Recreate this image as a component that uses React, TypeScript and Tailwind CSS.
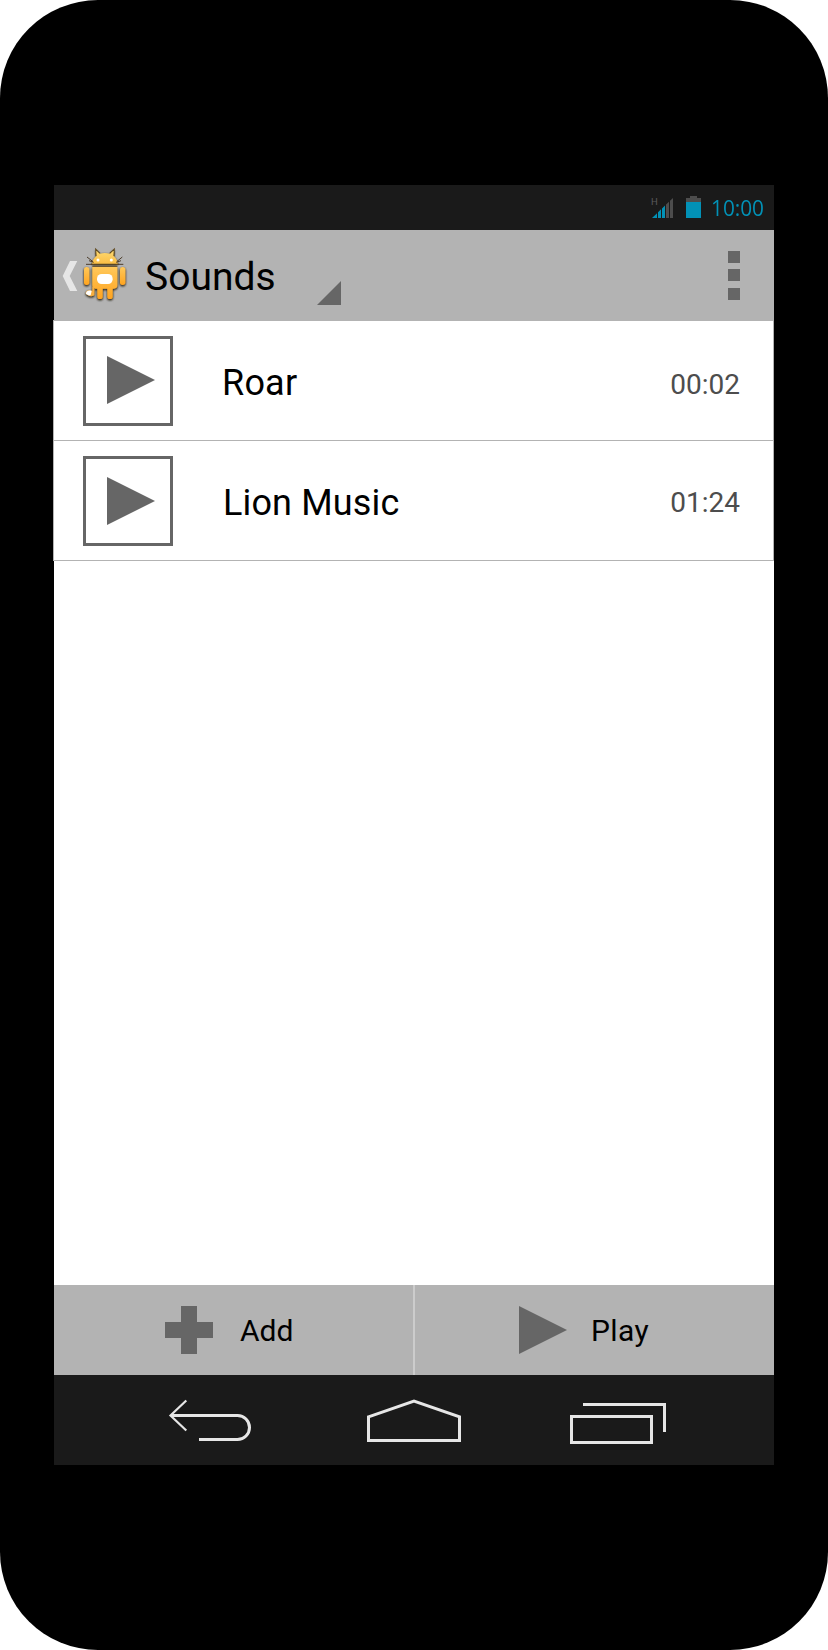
import React from "react";

const sounds = [
  { title: "Roar", time: "00:02", tri: "mt-[17px]", text: "ml-[49px] tracking-[0.2px]", timeText: "pt-[5px]" },
  { title: "Lion Music", time: "01:24", tri: "mt-[18px]", text: "ml-[50px] tracking-[0.15px]", timeText: "pt-[3px]" },
];

function PlayTriangle({ className = "" }: { className?: string }) {
  return (
    <svg className={`block h-12 w-12 shrink-0 ${className}`} viewBox="0 0 48 48">
      <path d="M0 0L48 24L0 48Z" fill="#666" />
    </svg>
  );
}

function StatusBar() {
  return (
    <div className="flex h-[45px] shrink-0 bg-[#1a1a1a] pl-[597px]">
      <svg className="mt-[11px] block h-6 w-6 shrink-0" viewBox="0 0 24 24">
        <text x="0" y="9" fontFamily="Roboto, sans-serif" fontSize="9.5" fill="#5a5a5a">H</text>
        <path d="M1 22L6 17.2V22ZM7 16.2L10 13.3V22H7ZM11 12.4L14 9.5V22H11Z" fill="#0291b6" />
        <path d="M15 8.6L18 5.7V22H15ZM19 4.8L22 2V22H19Z" fill="#4d4d4d" />
      </svg>
      <svg className="mt-[11px] ml-[11px] block h-[22px] w-[15px] shrink-0" viewBox="0 0 15 22">
        <path d="M0 2H4V0H11V2H15V6H0Z" fill="#4d4d4d" />
        <path d="M0 6H15V22H0Z" fill="#0291b6" />
      </svg>
      <span className="ml-[10px] h-[45px] origin-left scale-x-[0.945] font-['Open_Sans',sans-serif] text-[22px] leading-[45px] text-[#0291b6]">
        10:00
      </span>
    </div>
  );
}

function CatIcon() {
  return (
    <svg className="mt-4 ml-[3px] block h-[57px] w-[49px] shrink-0" viewBox="63 33 147 171">
      <defs>
        <linearGradient id="head" x1="0" y1="0" x2="0" y2="1">
          <stop offset="0" stopColor="#ffdc76" />
          <stop offset="1" stopColor="#f9bd45" />
        </linearGradient>
        <linearGradient id="body" x1="0" y1="0" x2="0" y2="1">
          <stop offset="0" stopColor="#ffc85a" />
          <stop offset="1" stopColor="#ffa420" />
        </linearGradient>
        <filter id="shade" x="-20%" y="-20%" width="140%" height="140%">
          <feDropShadow dx="0" dy="3" stdDeviation="3" floodColor="#2a1c08" floodOpacity="0.9" />
          <feDropShadow dx="0" dy="1" stdDeviation="2" floodColor="#2a1c08" floodOpacity="0.5" />
        </filter>
      </defs>
      <g filter="url(#shade)">
        <path d="M97 156H103V180C98 186 83 184 77 175C78 166 86 164 97 168Z" fill="#f6ae40" />
        <path d="M78 175C79 167 87 165 95 168L92 181C86 182 80 180 78 175Z" fill="#fff" />
        <rect x="72" y="96" width="16" height="54" rx="8" fill="url(#body)" />
        <rect x="180" y="96" width="16" height="54" rx="8" fill="url(#body)" />
        <path d="M97 96H172V151Q172 161 162 161H158V185Q158 192 150 192Q142 192 142 185V161H128V185Q128 192 120 192Q112 192 112 185V161H107Q97 161 97 151Z" fill="url(#body)" />
        <path d="M96 87C97 76 103 68 109 64L107 42L121 56Q134 52 148 56L163 42L161 64C168 69 172 77 173 87Z" fill="url(#head)" />
      </g>
      <path d="M108 63L107 42L120 55M149 55L163 42L162 63M93 88H176M97 94H172" fill="none" stroke="#5e481f" strokeWidth="3.2" />
      <path d="M81 66L99 80M87 77L101 82M78 88H97M187 66L170 80M183 77L169 82M173 88H190" fill="none" stroke="#4c3d2b" strokeWidth="3" />
      <circle cx="114" cy="75" r="4.5" fill="#fff" />
      <circle cx="154" cy="75" r="4.5" fill="#fff" />
      <rect x="111" y="117" width="47" height="30" rx="14" fill="#fff" />
    </svg>
  );
}

function ActionBar() {
  return (
    <div className="flex h-[90px] shrink-0 bg-[#b3b3b3] pl-2">
      <svg className="mt-[31px] block h-[30px] w-4 shrink-0" viewBox="0 0 16 30">
        <path d="M8 0H15.3L7.7 15L15.3 30H8L0.7 15Z" fill="#e6e6e6" />
      </svg>
      <CatIcon />
      <h1 className="ml-[15px] w-[172px] pt-[2px] font-[Roboto,sans-serif] text-[39px] font-normal leading-[90px] text-black">Sounds</h1>
      <svg className="mt-[51px] block h-6 w-6 shrink-0" viewBox="0 0 24 24">
        <path d="M24 0V24H0Z" fill="#666" />
      </svg>
      <svg className="mt-[21px] mr-[34px] ml-auto block h-[49px] w-3 shrink-0" viewBox="0 0 12 49">
        <path d="M0 0H12V12H0ZM0 18H12V30H0ZM0 37H12V49H0Z" fill="#666" />
      </svg>
    </div>
  );
}

function NavBar() {
  return (
    <div className="flex h-[90px] shrink-0 bg-[#1a1a1a]">
      <svg className="mt-[22px] ml-[114px] block h-12 w-[84px] shrink-0" viewBox="168 1397 84 48" fill="none" stroke="#e6e6e6">
        <path d="M171 1415.5H237.5A12 12 0 0 1 237.5 1439.5H199" strokeWidth="3" />
        <path d="M186.3 1400.5L170.5 1415.5L186.3 1430.5" strokeWidth="2.2" />
      </svg>
      <svg className="mt-[22px] ml-[114px] block h-12 w-24 shrink-0" viewBox="366 1397 96 48" fill="none" stroke="#e6e6e6" strokeWidth="3">
        <path d="M368.5 1416.8L414 1401L459.5 1416.8V1440.5H368.5Z" />
      </svg>
      <svg className="mt-[22px] ml-[106px] block h-12 w-[100px] shrink-0" viewBox="568 1397 100 48" fill="none" stroke="#e6e6e6" strokeWidth="3">
        <path d="M571.5 1416.5H651.5V1442.5H571.5ZM583 1404.5H664.5V1432" />
      </svg>
    </div>
  );
}

export default function App() {
  return (
    <div className="h-[1650px] w-[828px] bg-white">
      <div className="flex h-full w-full rounded-[98px] bg-black pt-[185px] pl-[54px]">
        <main className="flex h-[1280px] w-[720px] flex-col bg-white">
          <StatusBar />
          <ActionBar />
          <ul className="-ml-px w-[721px] border-x border-t border-[#b3b3b3] bg-white">
            {sounds.map((s) => (
              <li key={s.title} className="flex h-[120px] border-b border-[#b3b3b3] pl-[29px]">
                <div className="mt-[15px] h-[90px] w-[90px] shrink-0 border-[3px] border-[#666] pl-[21px]">
                  <PlayTriangle className={s.tri} />
                </div>
                <span className={`pt-[3px] font-[Roboto,sans-serif] text-[36px] leading-[118px] text-black ${s.text}`}>{s.title}</span>
                <span className={`mr-[33px] ml-auto font-[Roboto,sans-serif] text-[28px] leading-[118px] text-[#4d4d4d] ${s.timeText}`}>{s.time}</span>
              </li>
            ))}
          </ul>
          <div className="mt-auto flex h-[90px] shrink-0 bg-[#b3b3b3] font-[Roboto,sans-serif] text-[30px] leading-[90px] text-black">
            <button className="flex w-[361px] items-center border-r-2 border-[#ccc] pl-[111px]">
              <svg className="block h-12 w-12 shrink-0" viewBox="0 0 48 48">
                <path d="M16 0H32V16H48V32H32V48H16V32H0V16H16Z" fill="#666" />
              </svg>
              <span className="ml-[27px] pt-[2px] leading-[88px]">Add</span>
            </button>
            <button className="flex w-[359px] items-center pl-[104px]">
              <PlayTriangle />
              <span className="ml-6 pt-[2px] leading-[88px] tracking-[0.4px]">Play</span>
            </button>
          </div>
          <NavBar />
        </main>
      </div>
    </div>
  );
}
